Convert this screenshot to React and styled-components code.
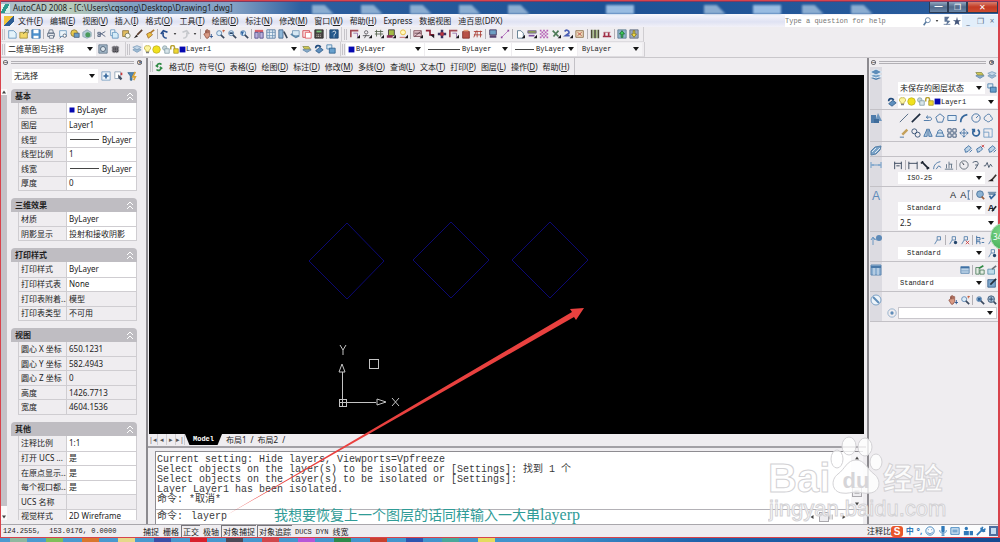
import React, { useState } from 'react';
import styled, { createGlobalStyle } from 'styled-components';

// ----- small drawings, all on a 12 x 12 grid
const lens = (
  <>
    <circle cx="5" cy="5" r="3" fill="#dcecf8" stroke="#5b84b0" />
    <path d="M7 7l4 4" stroke="#3b4a60" strokeWidth="2" />
  </>
);

const glyphs = {
  page: <path d="M2 2h6l3 3v6H2z" fill="#e4f3fb" stroke="#5f93bd" />,
  open: <><path d="M1 4h9v7H1z" fill="#f3d766" stroke="#a08a3a" /><path d="M5 6l5-5M7 1h4v4" stroke="#55603c" /></>,
  save: <><path d="M1 1h10v10H1z" fill="#4f93cf" stroke="#3c74aa" /><path d="M3 1h6v4H3zM3 8h6v3H3z" fill="#fff" /></>,
  print: <><path d="M4 1h4l1 4H3zM2 5h8v4H2z" fill="#e6e9ee" stroke="#59687c" /><path d="M4 8h5v3H4z" fill="#fff" stroke="#59687c" /></>,
  preview: <><path d="M2 2h8v7H2z" fill="#eef6fb" stroke="#6c9ac0" /><circle cx="8" cy="8" r="2" fill="#fff" stroke="#4d5c70" /><path d="M2 11l2-2" stroke="#4d5c70" /></>,
  publish: <><circle cx="5" cy="5" r="4" fill="#e9c94b" stroke="#8a7b40" /><path d="M5 5h6v5H5z" fill="#6a9cc6" stroke="#48617c" /></>,
  globe: <><path d="M6 1l5 3v5l-5 2-5-2V4z" fill="#b4cbd6" stroke="#8aa2b2" /><circle cx="7" cy="7" r="3" fill="#4a9a5c" /></>,
  cut: <path d="M10 3L3 7M10 9L4 5M1 4h3v2H1zM1 7h3v2H1z" stroke="#4b5c78" />,
  copy: <><path d="M2 1h5v7H2z" fill="#fff" stroke="#5f93bd" /><path d="M4 4h5l2 2v5H4z" fill="#d4ecf8" stroke="#5f93bd" /></>,
  paste: <><path d="M2 2h7v7H2z" fill="#e1bd5e" stroke="#8c7440" /><circle cx="8" cy="8" r="3" fill="#f8f8f0" stroke="#71785a" /></>,
  brush: <><path d="M11 1L5 7" stroke="#5b4030" strokeWidth="2" /><path d="M1 11l3-4 2 2z" fill="#26221f" /></>,
  match: <><path d="M11 1L6 5" stroke="#b07a2c" strokeWidth="2" /><path d="M2 6l4-2 3 3-5 4z" fill="#ecc23e" stroke="#a06a30" /></>,
  undo: <path d="M8 11C4 11 3 8 4 4M1 6l3-4 5 2" stroke="#254c8c" strokeWidth="2" />,
  redo: <path d="M4 11c4 0 5-3 4-7M11 6L8 2 3 4" stroke="#c6c8cc" strokeWidth="2" />,
  pan: <><path d="M3 5V2h1v3V1h2v4V2h2v6l-2 3H4L1 6z" fill="#d99a84" stroke="#96594a" /><path d="M10 6v5M8 9h4" stroke="#284f8a" /></>,
  zoom: <>{lens}<path d="M9 2h3M10 1v3" stroke="#c25432" /></>,
  zoomWin: <>{lens}<path d="M3 5h4" stroke="#26446a" strokeWidth="2" /></>,
  zoomPrev: <>{lens}<path d="M2 3h4L4 8z" fill="#3367a4" /></>,
  props: <><path d="M1 1h10v3H1z" fill="#d9606a" /><path d="M1 4h4v7H1zM7 4h4v7H7z" fill="#b9b0dc" stroke="#514a86" /></>,
  grid: <><path d="M1 1h10v10H1z" fill="#eaf2f8" stroke="#486d98" /><path d="M4 1v10M8 1v10M1 4h10M1 8h10" stroke="#6c91b4" /></>,
  palette: <><path d="M1 1h5v10H1z" fill="#8fb8d9" stroke="#46698e" /><path d="M7 3l4 8" stroke="#3b4858" strokeWidth="2" /></>,
  sheets: <><path d="M3 2h8v6H3z" fill="#d7e8f3" stroke="#7396b4" /><path d="M1 6l6 4 4-2" stroke="#5a87a9" strokeWidth="2" /></>,
  markup: <><path d="M1 2h8v8H1z" fill="#fbe3e3" stroke="#d0414a" /><path d="M4 4h7v7H4z" fill="#fff" stroke="#e0565c" /></>,
  calc: <><path d="M1 1h10v10H1z" fill="#4b4644" stroke="#2c2a2a" /><path d="M3 3h6" stroke="#78c478" strokeWidth="2" /><path d="M3 7h6M3 9h6" stroke="#e7ddd2" strokeDasharray="1 1" /></>,
  help: <><path d="M1 1h10v10H1z" fill="#25598c" stroke="#1f466e" /><path d="M4 4c1-2 4-2 4 0S6 6 6 8M6 9v1" stroke="#fff" /></>,
  dpxA: <><path d="M1 10V2h9" stroke="#a24a55" strokeWidth="2" /><path d="M4 5h5v5" stroke="#8e68a6" /><path d="M8 11h4V7z" fill="#16151a" /></>,
  dpxB: <><circle cx="5" cy="4" r="2" stroke="#57545a" /><path d="M1 8h8M3 11l2-4" stroke="#49494c" /><path d="M8 11h4V7z" fill="#16151a" /></>,
  dpxC: <><path d="M1 3h10M1 6h10M3 1v8M8 1v8" stroke="#52604c" /><path d="M8 11h4V7z" fill="#16151a" /></>,
  dpxD: <><path d="M3 1h7v7H3z" fill="#a2b944" stroke="#3d3138" /><path d="M1 9h7" stroke="#8b3157" strokeWidth="3" /><path d="M8 11h4V7z" fill="#16151a" /></>,
  dpxE: <><circle cx="6" cy="4" r="3" fill="#fff8bf" stroke="#e3b52e" /><path d="M2 10h7" stroke="#c35656" /><path d="M8 11h4V7z" fill="#16151a" /></>,
  dpxF: <><path d="M1 2h9v7H1z" fill="#e3c4cc" stroke="#7e4c57" /><path d="M2 9l7-6M2 5h8" stroke="#5a3a44" /><path d="M8 11h4V7z" fill="#16151a" /></>,
  dpxG: <><path d="M1 2h5v5h5" stroke="#8e2034" strokeWidth="2" /><path d="M6 7h5v4z" fill="#1f1822" /></>,
  dpxH: <><path d="M6 1v10M1 6h10" stroke="#3a3260" strokeWidth="3" /><path d="M4 4h4v4H4z" fill="#b9333f" /></>,
  dpxI: <><path d="M2 3h8v8H2z" fill="#b85247" stroke="#7d2a24" /><path d="M3 2h6" stroke="#e6a07a" strokeWidth="2" /></>,
  dpxJ: <path d="M1 3h10M1 10l3-8M5 10V2M9 10V2M1 7h10" stroke="#a83c33" />,
  dpxK: <><path d="M2 1h8v6H2z" fill="#6ea0c4" stroke="#43355f" /><path d="M2 9h8" stroke="#56426f" strokeWidth="3" /></>,
  dpxL: <><path d="M2 10l8-8" stroke="#b36ac0" /><path d="M1 10h2M9 2h2" stroke="#8b3e98" strokeWidth="2" /></>,
  dpxM: <><path d="M3 2h4l3 3v6H3z" fill="#fff" stroke="#4e7086" /><path d="M8 11h4V7z" fill="#16151a" /></>,
  dpxN: <><path d="M1 2h10v3H1z" fill="#8fa450" stroke="#77609c" /><path d="M2 8h7" stroke="#7d4fa0" strokeWidth="2" /><path d="M8 11h4V7z" fill="#16151a" /></>,
  dpxO: <path d="M1 2h2M5 2h2M9 2h2M3 4h2M7 4h2M1 6h2M5 6h2M9 6h2M3 8h2M7 8h2M1 10h2M5 10h2M9 10h2" stroke="#b45fb4" strokeWidth="2" />,
  dpxP: <><path d="M2 2l7 7M9 2L3 9" stroke="#4d7a56" strokeWidth="2" /><path d="M8 11h4V7z" fill="#16151a" /></>,
  dpxQ: <><path d="M2 3c2-3 6-1 5 2L3 8h5" stroke="#4b5fb4" strokeWidth="2" /><path d="M8 11h4V7z" fill="#16151a" /></>,
  dpxR: <><path d="M1 2h9v8H1z" fill="#ecd8b8" stroke="#8a6d4a" /><path d="M3 4l5 4M8 4L3 8" stroke="#b3473e" /></>,
  dpxS: <><path d="M2 1v10M6 1v10M10 1v10" stroke="#4a4c36" strokeWidth="2" /><path d="M4 1v10M8 1v10" stroke="#8eae5e" /></>,
  dpxT: <><path d="M1 9h10M3 8V4M8 8V4" stroke="#a12f47" strokeWidth="2" /><path d="M2 4h8" stroke="#b36a7c" /></>,
  up: <><path d="M1 1h10v10H1z" fill="#8fb3c9" stroke="#5b7b93" /><path d="M6 2l3 4H7v4H5V6H3z" fill="#3dd05a" stroke="#1c6b34" /></>,
  down: <><path d="M1 1h10v10H1z" fill="#9aa6bd" stroke="#5f6a82" /><path d="M6 10L3 6h2V2h2v4h2z" fill="#f3de4c" stroke="#84751c" /></>,
  gear: <><path d="M1 1h10v10H1z" fill="#a6bacb" stroke="#5f7488" /><circle cx="6" cy="6" r="3" fill="#dfe8ee" stroke="#44566a" /></>,
  chip: <><path d="M3 3h7v7H3z" fill="#35343a" /><path d="M2 4h9M2 6h9M2 8h9M5 2v9M8 2v9" stroke="#77767c" /></>,
  layers: <><path d="M6 7l5 2-5 2-5-2z" fill="#4c7fae" /><path d="M6 4l6 3-6 2-6-2z" fill="#77a3c9" stroke="#e4edf5" /><path d="M6 0l6 3-6 3-6-3z" fill="#5d8db9" stroke="#e4edf5" /></>,
  layersSoft: <><path d="M6 5l5 2-5 3-5-3z" fill="#9cb9d2" stroke="#7d9fbd" /><path d="M6 2l5 2-5 3-5-3z" fill="#c3d6e6" stroke="#7d9fbd" /></>,
  layerMake: <><path d="M6 5l5 2-5 3-5-3z" fill="#87a9c8" stroke="#5f87ab" /><path d="M1 3h7l2 3H3z" fill="#d2c854" stroke="#8d9150" /></>,
  layerPrev: <><path d="M7 4l4 3-5 4-4-3z" fill="#5f8fbd" stroke="#33608e" /><path d="M2 5c0-4 5-4 6-1" stroke="#214b7c" strokeWidth="2" /></>,
  layerState: <><path d="M1 1h6v5H1z" fill="#dceaf4" stroke="#4c80ad" /><path d="M4 5h7v6H4z" fill="#68a0cd" stroke="#2f618f" /></>,
  bulb: <><path d="M6 1a3 3 0 0 1 2 6v2H4V7a3 3 0 0 1 2-6z" fill="#fdf5a0" stroke="#b9aa3e" /><path d="M4 10h4" stroke="#808080" strokeWidth="2" /></>,
  sun: <circle cx="6" cy="6" r="5" fill="#f1e11d" stroke="#bcae22" />,
  vp: <><circle cx="5" cy="4" r="3" fill="#c7d6da" stroke="#86a0a8" /><path d="M5 5h6v6H5z" fill="#d8e6ea" stroke="#7c98a3" /></>,
  lock: <><path d="M1 6V3c0-3 5-3 5 0v3" stroke="#b9a233" strokeWidth="2" /><path d="M5 5h6v6H5z" fill="#efd832" stroke="#a18f22" /></>,
  navy: <path d="M1 1h10v10H1z" fill="#0508b0" />,
  plusBox: <><path d="M1 1h10v10H1z" fill="#edf4fa" stroke="#7a9fc2" /><path d="M6 3v6M3 6h6" stroke="#35679c" strokeWidth="2" /></>,
  pick: <><path d="M1 1h7v8H1z" fill="#fff" stroke="#8aa0b4" /><path d="M5 4l5 5-2 2-3-3z" fill="#435064" /><path d="M9 2v3" stroke="#cc3a3a" strokeWidth="2" /></>,
  filter: <><path d="M1 2h8L6 6v5H4V6z" fill="#4e87b8" stroke="#36668f" /><path d="M10 1L7 7h3l-2 4" stroke="#d9a336" strokeWidth="2" /></>,
  dpx: <path d="M9 3C6 0 2 4 5 6M3 9c3 3 7-1 4-3M2 4l3 2M7 6l3 2" stroke="#2f8a44" strokeWidth="2" />,
  // right hand panels
  shapes: <><path d="M1 3h5v8H1z" fill="#4f7cab" /><path d="M8 1l4 8H5z" fill="#6e97bf" /><path d="M4 7h5v4H4z" fill="#3f6c9b" /></>,
  solid: <><path d="M1 7l4-4 6-1-1 4-4 4-5 1z" fill="#7aa3c8" stroke="#5781a8" /><path d="M2 8l4-4M5 9l5-5" stroke="#dce8f2" /></>,
  dims: <path d="M1 3v6M11 3v6M1 6h10M3 5v2M9 5v2" stroke="#6f9cc7" />,
  leader: <><circle cx="9" cy="4" r="3" fill="#5d8ab7" /><path d="M3 11V4l4 2M1 6l2-3 2 3" stroke="#6c98c2" /></>,
  tableBig: <><path d="M1 1h10v10H1z" fill="#8cb0d2" stroke="#6089b2" /><path d="M1 3h10" stroke="#4878a8" strokeWidth="2" /><path d="M4 4v7M8 4v7" stroke="#dbe7f2" /></>,
  compass: <><circle cx="6" cy="6" r="5" fill="#eef4f9" stroke="#7fa3c6" /><path d="M3 3l6 6" stroke="#5f8cb8" strokeWidth="2" /></>,
  line: <path d="M1 11L11 1" stroke="#3e5876" />,
  ray: <path d="M1 11L11 1" stroke="#1f2d40" strokeWidth="2" />,
  pline: <path d="M1 9h7c3 0 3-4 0-4H4M6 3L4 5l2 2" stroke="#35679c" />,
  polygon: <path d="M6 1l5 4-2 6H3L1 5z" stroke="#35679c" />,
  rect: <path d="M1 3h10v6H1z" fill="#e5eff8" stroke="#35679c" />,
  arc: <path d="M2 11c0-5 3-8 8-9" stroke="#35679c" strokeWidth="2" />,
  circle: <><circle cx="6" cy="6" r="5" stroke="#35679c" /><path d="M6 6l3-3" stroke="#35679c" /></>,
  cloud: <path d="M4 3c2-3 6-1 5 1 3 1 3 5 0 5-2 3-5 1-5 0-3 0-4-4 0-6z" stroke="#35679c" />,
  erase: <><path d="M10 2L4 8" stroke="#c4a05a" strokeWidth="3" /><path d="M1 11h5" stroke="#35679c" /></>,
  copyObj: <><circle cx="4" cy="4" r="3" stroke="#28456a" /><circle cx="8" cy="8" r="3" stroke="#28456a" /></>,
  mirror: <path d="M5 1v9H1zM7 1v9h4z" fill="#b7cee2" stroke="#35679c" />,
  offset: <path d="M1 10h10L9 6H3zM3 6c0-5 6-5 6 0" fill="#d5e3ef" stroke="#35679c" />,
  array: <path d="M1 1h4v4H1zM7 1h4v4H7zM1 7h4v4H1zM7 7h4v4H7z" stroke="#28456a" />,
  move: <path d="M6 1v10M1 6h10M4 3l2-2 2 2M4 9l2 2 2-2M3 4L1 6l2 2M9 4l2 2-2 2" stroke="#35679c" />,
  rotate: <path d="M3 3a4 4 0 1 0 5-1M1 2h3v3" stroke="#35679c" strokeWidth="2" />,
  scale: <path d="M1 1h10v10H1zM1 5h6v6" stroke="#6c98c2" />,
  stamp: <><path d="M3 10l-1-4 5-4 3 3-4 4z" fill="#bcd3e6" stroke="#35679c" /><path d="M8 10l3-3" stroke="#35679c" /></>,
  stampX: <><path d="M3 10l-1-4 5-3 2 3-3 3z" fill="#bcd3e6" stroke="#35679c" /><path d="M8 1l3 3M11 1L8 4" stroke="#c93a3a" /></>,
  dimLin: <path d="M2 2v9M10 2v9M2 4h8M4 7h4" stroke="#24344a" />,
  dimAlign: <path d="M1 2v9M11 2v9M1 4h10" stroke="#24344a" />,
  dimArc: <path d="M2 2l8 8M1 4l3-2M8 11l3-2" stroke="#1c2430" strokeWidth="2" />,
  dimOrd: <path d="M2 11c0-5 3-8 8-9M5 11l3-4 3 2" stroke="#35679c" />,
  dimBase: <path d="M1 11h10M3 10V5M6 10V2M9 10V5M6 5h4" stroke="#56697c" />,
  dimRad: <><circle cx="6" cy="6" r="5" stroke="#5a6570" /><path d="M6 6L4 3" stroke="#1c2430" /></>,
  dimJog: <path d="M2 3c5-3 8 0 6 3L5 11M5 6h3" stroke="#35465c" />,
  wave: <path d="M1 7h2l2-4 2 6 2-4 2 3" stroke="#35465c" />,
  styleBrush: <><path d="M11 2L6 8" stroke="#3d3330" strokeWidth="2" /><path d="M1 10h7l-2-3z" fill="#1f1c1c" /></>,
  findText: <><circle cx="6" cy="5" r="4" fill="#8db2d2" stroke="#456f97" /><path d="M8 8l3 3" stroke="#9d5e3a" strokeWidth="2" /></>,
  spell: <><path d="M1 3h10M2 5h8" stroke="#7794ae" strokeWidth="2" /><path d="M3 7l2 3 5-5" stroke="#35679c" strokeWidth="2" /></>,
  mlead: <path d="M2 11l3-5V2h4v4H5" stroke="#4d7ba8" />,
  mleadAdd: <><path d="M2 11l3-5V2h4v4H5" stroke="#4d7ba8" /><circle cx="9" cy="9" r="2" fill="#24466c" /></>,
  mleadDel: <><path d="M2 11l3-5V2h4v4H5" stroke="#4d7ba8" /><path d="M7 7l4 4M11 7l-4 4" stroke="#c93a3a" /></>,
  mleadSet: <path d="M2 1v10M2 3h4v3H2M2 8h4v3M8 4h3M8 9h3" stroke="#35679c" />,
  table: <><path d="M1 2h10v8H1z" fill="#bcd2e6" stroke="#5a85b0" /><path d="M1 3h10" stroke="#3f70a3" strokeWidth="2" /><path d="M1 7h10" stroke="#7fa3c6" /></>,
  link: <><path d="M1 3h4v8H1zM6 6h5v5H6z" fill="#e3ede3" stroke="#4d7b5c" /><path d="M5 4l5-3" stroke="#2f8a44" strokeWidth="2" /></>,
  sheetPen: <><path d="M1 5h8v6H1z" fill="#bddbe9" stroke="#5b93ae" /><path d="M6 5l5-4" stroke="#6a7078" strokeWidth="2" /></>,
  tableStyle: <><path d="M1 2h9v9H1z" fill="#7ea6cb" stroke="#35608c" /><path d="M4 8l7-7" stroke="#26303c" strokeWidth="2" /></>,
  zoomAll: <>{lens}<path d="M3 3h4v4H3z" fill="#2f6297" /></>,
  zoomExt: <><circle cx="5" cy="5" r="4" fill="#a6c2da" stroke="#38506c" /><path d="M5 2v6M2 5h6" stroke="#25405f" /><path d="M8 8l3 3" stroke="#3b4a60" strokeWidth="2" /></>,
  orbit: <><circle cx="6" cy="6" r="5" stroke="#8baac6" /><circle cx="6" cy="6" r="2" fill="#5f8cb8" /></>,
  a: <text x="6" y="10" textAnchor="middle" fontSize="11" fontFamily="Liberation Sans" fill="#20242a">A</text>,
  aBig: <text x="6" y="11" textAnchor="middle" fontSize="12" fontFamily="Liberation Sans" fill="#5f8cba">A</text>,
  aCur: <><text x="4" y="10" textAnchor="middle" fontSize="11" fontFamily="Liberation Sans" fill="#20242a">A</text><path d="M10 1v10M9 1h3M9 11h3" stroke="#35679c" /></>,
  aPen: <><text x="5" y="10" textAnchor="middle" fontSize="11" fontWeight="700" fontFamily="Liberation Sans" fill="#20242a">A</text><path d="M11 4L6 10" stroke="#20242a" strokeWidth="2" /></>,
  // input method bar
  smile: <><circle cx="6" cy="6" r="5" stroke="#2f78b8" /><path d="M4 4v1M8 4v1M3 7c1 3 5 3 6 0" stroke="#2f78b8" /></>,
  mic: <><path d="M6 1v5" stroke="#2f78b8" strokeWidth="4" strokeLinecap="round" /><path d="M2 5c0 5 8 5 8 0M6 9v3M4 11h4" stroke="#2f78b8" /></>,
  keyb: <><path d="M1 2h10v8H1z" fill="#cfe2f2" stroke="#2f78b8" /><path d="M3 5h6M3 7h6" stroke="#2f78b8" /></>,
  user: <><circle cx="4" cy="3" r="2" fill="#2f78b8" /><path d="M1 6h6v5H1zM8 6h4v5H8z" fill="#2f78b8" /></>,
  wrench: <path d="M1 11l6-6M6 2c0 4 2 5 5 4M8 1L7 4l3 1 1-2" stroke="#2f78b8" strokeWidth="2" />,
  search: <><circle cx="7" cy="5" r="3" stroke="#5a7ba0" /><path d="M5 7l-3 4" stroke="#5a7ba0" strokeWidth="2" /></>,
  comm: <><path d="M3 1h6L6 5l4 1-5 5 1-4H3z" fill="#5b7396" /><path d="M2 10h8" stroke="#5b7396" /></>,
  star: <path d="M6 1l1 4h4L8 7l1 4-3-2-3 2 1-4-3-2h4z" fill="#43557a" />,
  // scroll bar parts
  triUp: <path d="M2 9l4-6 4 6z" fill="#444" />,
  triDown: <path d="M2 3l4 6 4-6z" fill="#444" />,
  triLeft: <path d="M9 2L3 6l6 4z" fill="#444" />,
  triRight: <path d="M3 2l6 4-6 4z" fill="#444" />,
  ribsH: <path d="M1 3h10M1 6h10M1 9h10" stroke="#8a888d" />,
  ribsV: <path d="M3 1v10M6 1v10M9 1v10" stroke="#8a888d" />,
};

function Glyph({ name, size = 10 }) {
  return (
    <svg width={size} height={size} viewBox="0 0 12 12" fill="none" aria-hidden="true">
      {glyphs[name]}
    </svg>
  );
}

function Tools({ list }) {
  return list.map((name, i) => {
    if (name === '|') return <Divider key={i} />;
    if (name === '.') return <Dot key={i} aria-label="more"><Glyph name="triDown" size={4} /></Dot>;
    return <Tool key={i} aria-label={name}><Glyph name={name} /></Tool>;
  });
}

function Combo({ label, value, sans, lead = [], line, pad, ...rest }) {
  return (
    <ComboFrame {...rest}>
      {lead.map((name) => <Glyph key={name} name={name} size={name === 'navy' ? 7 : 9} />)}
      {line && <Stroke $w={line} />}
      <ComboSelect aria-label={label} $sans={sans} $pad={pad} defaultValue={value}>
        <option>{value}</option>
      </ComboSelect>
      <svg width="6" height="4" viewBox="0 0 6 4" aria-hidden="true"><path d="M0 0h6L3 4z" fill="#151515" /></svg>
    </ComboFrame>
  );
}

function Key({ text }) {
  const m = text.match(/^(.*)\((.)\)$/);
  return m ? <>{m[1]}(<u>{m[2]}</u>)</> : text;
}

const menus = ['文件(F)', '编辑(E)', '视图(V)', '插入(I)', '格式(O)', '工具(T)', '绘图(D)', '标注(N)', '修改(M)', '窗口(W)', '帮助(H)', 'Express', '数据视图', '迪百思(DPX)'];
const dpxMenus = ['格式(F)', '符号(C)', '表格(G)', '绘图(D)', '标注(D)', '修改(M)', '多线(O)', '查询(L)', '文本(T)', '打印(P)', '图层(L)', '操作(D)', '帮助(H)'];

const standard = ['page', 'open', 'save', '|', 'print', 'preview', 'publish', 'globe', '|', 'cut', 'copy', 'paste', 'brush', 'match', '|', 'undo', '.', 'redo', '.', '|', 'pan', 'zoom', 'zoomWin', 'zoomPrev', '|', 'props', 'grid', 'palette', 'sheets', 'markup', 'calc', '|', 'help'];
const express = ['dpxA', 'dpxB', 'dpxC', 'dpxD', 'dpxE', '|', 'dpxF', 'dpxG', 'dpxH', 'dpxA', 'dpxI', 'dpxJ', '|', 'dpxK', 'dpxL', '|', 'dpxM', 'dpxN', 'dpxO', 'dpxP', 'dpxQ', 'dpxR', '|', 'dpxS', 'dpxT', '|', 'up', 'down'];

// name, value, read only, mark in front of the value
const groups = [
  { title: '基本', rows: [['颜色', 'ByLayer', 0, 'navy'], ['图层', 'Layer1'], ['线型', 'ByLayer', 0, 'line'], ['线型比例', '1'], ['线宽', 'ByLayer', 0, 'line'], ['厚度', '0']] },
  { title: '三维效果', rows: [['材质', 'ByLayer'], ['阴影显示', '投射和接收阴影']] },
  { title: '打印样式', rows: [['打印样式', 'ByLayer'], ['打印样式表', 'None'], ['打印表附着...', '模型', 1], ['打印表类型', '不可用', 1]] },
  { title: '视图', rows: [['圆心 X 坐标', '650.1231', 1], ['圆心 Y 坐标', '582.4943', 1], ['圆心 Z 坐标', '0', 1], ['高度', '1426.7713', 1], ['宽度', '4604.1536', 1]] },
  { title: '其他', rows: [['注释比例', '1:1'], ['打开 UCS ...', '是'], ['在原点显示...', '是'], ['每个视口都...', '是'], ['UCS 名称', '', 1], ['视觉样式', '2D Wireframe']] },
];

const history = [
  'Current setting: Hide layers, Viewports=Vpfreeze',
  'Select objects on the layer(s) to be isolated or [Settings]: 找到 1 个',
  'Select objects on the layer(s) to be isolated or [Settings]:',
  'Layer Layer1 has been isolated.',
  '命令: *取消*',
];

const modes = [['捕捉'], ['栅格'], ['正交', 1], ['极轴'], ['对象捕捉', 1], ['对象追踪', 1], ['DUCS'], ['DYN'], ['线宽']];

// file icons of the desktop seen through the title bar: s = sheet, w = window
const ghosts = 'sssss-w-swss'.split('');

const taskIcons = ['#8fb8a0', '#7fbf5a', '#d9772e', '#e6d98a', '#3a4fa8', '#d8202c', '#4c4a58', '#d0484c', '#b557d8', '#2c8a4c', '#c8402e', '#2d55b0', '#4aa89a', '#e4dc5e'];

function PaletteHead() {
  return (
    <HeadRow>
      <HeadButton aria-label="最小化">−</HeadButton>
      <HeadLines />
      <HeadButton aria-label="关闭">×</HeadButton>
    </HeadRow>
  );
}

function Properties() {
  return (
    <Palette>
      <PaletteHead />
      <PickRow>
        <Combo label="选择" value="无选择" sans $w={86} $h={14} />
        <Tools list={['plusBox', 'pick', 'filter']} />
      </PickRow>
      <PaletteBody>
        <SideScroll><Glyph name="triUp" size={6} /><i /><Glyph name="triDown" size={6} /></SideScroll>
        <GroupList>
          {groups.map((g) => (
            <section key={g.title}>
              <GroupTitle>
                {g.title}
                <svg width="6" height="8" viewBox="0 0 6 8" fill="none" stroke="#fff" aria-hidden="true"><path d="M0 4l3-3 3 3M0 8l3-3 3 3" /></svg>
              </GroupTitle>
              <PropTable>
                <tbody>
                  {g.rows.map(([name, value, ro, mark]) => (
                    <tr key={name}>
                      <th scope="row">{name}</th>
                      <PropValue $ro={ro}>
                        <span>
                          {mark === 'navy' && <Glyph name="navy" size={6} />}
                          {mark === 'line' && <Stroke $w={29} />}
                          {value}
                        </span>
                      </PropValue>
                    </tr>
                  ))}
                </tbody>
              </PropTable>
            </section>
          ))}
        </GroupList>
      </PaletteBody>
    </Palette>
  );
}

function Drawing() {
  return (
    <Canvas aria-label="Model">
      <g fill="none" stroke="#0b0872">
        <path d="M198 148l37 38-37 38-38-38z" />
        <path d="M302 147l38 38-38 38-38-38z" />
        <path d="M401 147l38 38-38 38-38-38z" />
      </g>
      <g fill="none" stroke="#c4c4c4" shapeRendering="crispEdges">
        <path d="M190 324h7v7h-7zM193 297v34M190 327h37M220 284h9v9h-9z" />
      </g>
      <g fill="none" stroke="#c4c4c4">
        <path d="M193 289l3 8h-6zM237 327l-9-3v6z" />
        <path d="M191 270l3 5 3-5M194 275v5M243 323l7 8M250 323l-7 8" />
      </g>
    </Canvas>
  );
}

function Command() {
  const [cmd, setCmd] = useState('layerp');
  return (
    <CommandFrame>
      <CommandBox>
        <HistoryRow>
          <History>{history.map((t, i) => <div key={i}>{t}</div>)}</History>
          <VScroll>
            <Glyph name="triUp" size={6} />
            <Thumb $push><Glyph name="ribsH" size={6} /></Thumb>
            <Glyph name="triDown" size={6} />
          </VScroll>
        </HistoryRow>
        <InputRow>
          <label htmlFor="cmd">命令:</label>
          <CommandInput id="cmd" value={cmd} onChange={(e) => setCmd(e.target.value)} />
          <HScroll>
            <Glyph name="triLeft" size={6} />
            <Thumb><Glyph name="ribsV" size={6} /></Thumb>
            <Glyph name="triRight" size={6} />
          </HScroll>
        </InputRow>
      </CommandBox>
    </CommandFrame>
  );
}

function Dashboard() {
  return (
    <Dash>
      <PaletteHead />
      <Panel $h={43}>
        <PanelIcon><Glyph name="layers" size={12} /></PanelIcon>
        <PanelBody>
          <PanelRow><Tools list={['layerMake', 'layersSoft']} /></PanelRow>
          <PanelRow><Combo label="图层状态" value="未保存的图层状态" sans $grow /><Tools list={['layerState']} /></PanelRow>
          <PanelRow $wide><Tools list={['layerPrev']} /><Combo label="图层" value="Layer1" lead={['bulb', 'sun', 'vp', 'lock', 'navy']} $grow $tight /></PanelRow>
        </PanelBody>
      </Panel>
      <Panel $h={32}>
        <PanelIcon><Glyph name="shapes" size={12} /></PanelIcon>
        <PanelBody>
          <PanelRow $more><Tools list={['line', 'ray', 'pline', 'polygon', 'rect', 'arc', 'circle', 'cloud']} /></PanelRow>
          <PanelRow $more><Tools list={['erase', 'copyObj', 'mirror', 'offset', 'array', 'move', 'rotate', 'scale']} /></PanelRow>
        </PanelBody>
      </Panel>
      <Panel $h={15}>
        <PanelIcon><Glyph name="solid" size={12} /></PanelIcon>
        <PanelBody><PanelRow><Tools list={['stamp', 'stampX', 'stamp']} /></PanelRow></PanelBody>
      </Panel>
      <Panel $h={30}>
        <PanelIcon><Glyph name="dims" size={12} /></PanelIcon>
        <PanelBody>
          <PanelRow $more><Tools list={['dimLin', '|', 'dimAlign', 'dimArc', 'dimOrd', 'dimBase', '|', 'dimRad', 'dimJog', 'wave']} /></PanelRow>
          <PanelRow><Combo label="标注样式" value="ISO-25" pad={7} $grow /><Tools list={['styleBrush']} /></PanelRow>
        </PanelBody>
      </Panel>
      <Panel $h={45}>
        <PanelIcon><Glyph name="aBig" size={12} /></PanelIcon>
        <PanelBody>
          <PanelRow><Tools list={['a', 'aCur', '|', 'findText', 'spell']} /></PanelRow>
          <PanelRow><Combo label="文字样式" value="Standard" pad={7} $grow /><Tools list={['aPen']} /></PanelRow>
          <PanelRow><Combo label="文字高度" value="2.5" sans $grow $h={14} /></PanelRow>
        </PanelBody>
      </Panel>
      <Panel $h={30}>
        <PanelIcon><Glyph name="leader" size={12} /></PanelIcon>
        <PanelBody>
          <PanelRow><Tools list={['mlead', '|', 'mleadAdd', 'mleadDel', '|', 'mleadSet', 'mlead']} /></PanelRow>
          <PanelRow><Combo label="引线样式" value="Standard" pad={7} $grow /><Tools list={['mleadAdd']} /></PanelRow>
        </PanelBody>
      </Panel>
      <Panel $h={30}>
        <PanelIcon><Glyph name="tableBig" size={12} /></PanelIcon>
        <PanelBody>
          <PanelRow><Tools list={['table', '|', 'link', 'sheetPen']} /></PanelRow>
          <PanelRow><Combo label="表格样式" value="Standard" $grow /><Tools list={['tableStyle']} /></PanelRow>
        </PanelBody>
      </Panel>
      <Panel $h={30}>
        <PanelIcon><Glyph name="compass" size={12} /></PanelIcon>
        <PanelBody>
          <PanelRow><Tools list={['pan', 'zoom', '|', 'zoomAll', 'zoomExt']} /></PanelRow>
          <PanelRow $wide><Tools list={['orbit']} /><Combo label="视图" value="" $grow $edge /></PanelRow>
        </PanelBody>
      </Panel>
    </Dash>
  );
}

function Watermark() {
  return (
    <Mark width="184" height="90" viewBox="0 0 184 90" aria-hidden="true">
      <g fill="#fff" fillOpacity="0.8" stroke="#d3d2d5" strokeWidth="1">
        <ellipse cx="81" cy="10" rx="7" ry="9" />
        <ellipse cx="97" cy="11" rx="7" ry="9" />
        <ellipse cx="69" cy="23" rx="6" ry="9" />
        <ellipse cx="108" cy="26" rx="6" ry="8" />
        <path d="M88 24c9 0 11 9 18 14 8 6 6 18-4 19-6 1-9-1-14-1s-8 2-14 1c-10-1-12-13-4-19 7-5 9-14 18-14z" />
        <text x="0" y="56" fontSize="40" fontWeight="700" fontFamily="Liberation Sans">Bai</text>
        <text x="115" y="53" fontSize="30" fontWeight="700" fontFamily="Noto Sans CJK SC">经验</text>
        <text x="1" y="80" fontSize="22" fontFamily="Liberation Sans">jingyan.baidu.com</text>
      </g>
      <text x="88" y="52" textAnchor="middle" fontSize="22" fontWeight="700" fontFamily="Liberation Sans" fill="#d6d5d8">du</text>
    </Mark>
  );
}

function App() {
  return (
    <Page>
      <GlobalStyle />
      <AppWindow>
        <TitleBar>
          <AppLogo />
          <h1>AutoCAD 2008 - [C:\Users\cqsong\Desktop\Drawing1.dwg]</h1>
          <Ghosts>{ghosts.map((g, i) => <Ghost key={i} $kind={g} />)}</Ghosts>
          <WinButton aria-label="最小化">━</WinButton>
          <WinButton aria-label="还原">❐</WinButton>
          <WinButton aria-label="关闭" $close>✕</WinButton>
        </TitleBar>

        <MenuBar>
          <FileMark />
          {menus.map((m) => <MenuItem key={m}><Key text={m} /></MenuItem>)}
          <HelpBox aria-label="Help" placeholder="Type a question for help" />
          <HelpTools><Tools list={['search', '.', 'comm', 'star']} /></HelpTools>
          <DocButton aria-label="最小化">_</DocButton>
          <DocButton aria-label="还原">❐</DocButton>
          <DocButton aria-label="关闭">×</DocButton>
        </MenuBar>

        <ToolRow>
          <ToolBar $pad={1}><Grip /><Tools list={standard} /></ToolBar>
          <ToolBar $pad={3}><Grip $wide /><Tools list={express} /></ToolBar>
        </ToolRow>

        <ToolRow>
          <ToolBar $pad={4}>
            <Grip />
            <Combo label="工作空间" value="二维草图与注释" sans $w={90} $h={13} />
            <Tools list={['gear', 'chip']} />
          </ToolBar>
          <ToolBar $pad={3}>
            <Grip />
            <Tools list={['layersSoft']} />
            <Combo label="图层" value="Layer1" lead={['bulb', 'sun', 'vp', 'lock', 'navy']} $w={157} $h={13} $tight />
            <Tools list={['layerMake', 'layerPrev', 'layerState']} />
          </ToolBar>
          <ToolBar $pad={1}>
            <Grip />
            <Combo label="颜色" value="ByLayer" lead={['navy']} $w={78} $h={13} />
            <Combo label="线型" value="ByLayer" line={32} $w={86} $h={13} />
            <Combo label="线宽" value="ByLayer" line={19} $w={65} $h={13} />
            <Combo label="打印样式" value="ByLayer" pad={2} $w={64} $h={13} $flat />
          </ToolBar>
        </ToolRow>

        <Main>
          <Properties />
          <Center>
            <DpxBar>
              <Grip />
              <Glyph name="dpx" />
              <DpxItems>{dpxMenus.map((m, i) => <MenuItem key={i}><Key text={m} /></MenuItem>)}</DpxItems>
            </DpxBar>
            <Drawing />
            <TabRow>
              <TabNav aria-label="first">|◂</TabNav>
              <TabNav aria-label="previous">◂</TabNav>
              <TabNav aria-label="next">▸</TabNav>
              <TabNav aria-label="last">▸|</TabNav>
              <Tab $on>Model</Tab>
              <Tab>布局1</Tab>/
              <Tab>布局2</Tab>/
            </TabRow>
            <Command />
            <Arrow width="360" height="210" viewBox="0 0 360 210" aria-hidden="true">
              <path d="M0 208L347 4 345 1 359 0 351 12 349 9z" fill="#e9413f" />
            </Arrow>
            <Note>我想要恢复上一个图层的话同样输入一大串<span>layerp</span></Note>
          </Center>
          <Dashboard />
        </Main>

        <StatusBar>
          <Coords>{'124.2555,  153.0176, 0.0000'}</Coords>
          {modes.map(([m, on]) => <Mode key={m} $on={on} $latin={/^D/.test(m)}>{m}</Mode>)}
          <Scale>注释比</Scale>
          <Ime>
            <ImeLogo>S</ImeLogo>
            <b>中</b>
            <b>°,</b>
            <Glyph name="smile" />
            <Glyph name="mic" />
            <Glyph name="keyb" />
            <Glyph name="user" />
            <Glyph name="wrench" />
          </Ime>
          <Tray />
        </StatusBar>
      </AppWindow>
      <TaskBar>{taskIcons.map((c, i) => <TaskIcon key={i} $c={c} />)}</TaskBar>
      <Watermark />
      <Badge>34</Badge>
    </Page>
  );
}

export default App;

// ----- css global
const GlobalStyle = createGlobalStyle`
  * { box-sizing: border-box; }
  body {
    margin: 0;
    overflow: hidden;
    font: 8px/12px "Noto Sans", "Noto Sans CJK SC", sans-serif;
    color: #222;
  }
  button, input, select {
    font: inherit;
    color: inherit;
    border: 0;
    padding: 0;
    margin: 0;
    background: none;
    border-radius: 0;
    outline: 0;
  }
  svg { flex: none; display: block; }
`;

const Page = styled.div`
  position: relative;
  height: 100vh;
  display: flex;
  flex-direction: column;
  overflow: hidden;
`;
const AppWindow = styled.div`
  flex: 1;
  min-height: 0;
  display: flex;
  flex-direction: column;
  background: #efedf0;
  border: 1px solid #d8434c;
  border-right-width: 2px;
`;

// ----- title
const TitleBar = styled.header`
  height: 13px;
  flex: none;
  display: flex;
  align-items: center;
  gap: 3px;
  border-top: 1px solid #7c3a62;
  background: linear-gradient(90deg, #a9bccd 0, #b6cbb9 70px, #7fa0c4 130px, #86a3c6 230px, #2d5f9f 300px, #1d5295 60%, #2a5d9e 100%);
  h1 {
    margin: 0;
    font-size: 8px;
    font-weight: 400;
    white-space: nowrap;
  }
`;
const AppLogo = styled.i`
  width: 9px;
  height: 9px;
  background: linear-gradient(120deg, #e4f3ef 30%, #2c9a8d 31% 60%, #d7eee9 61%);
`;
const Ghosts = styled.div`
  flex: 1;
  height: 100%;
  padding: 3px 0 0 76px;
  display: flex;
  overflow: hidden;
  filter: blur(1px);
`;
const Ghost = styled.i`
  width: ${(p) => (p.$kind === 'w' ? 28 : 22)}px;
  margin-right: ${(p) => (p.$kind === 'w' ? 21 : 27)}px;
  flex: none;
  background: ${(p) => ({ s: '#8badd1', w: '#98bce2' }[p.$kind] || 'none')};
  clip-path: ${(p) => (p.$kind === 's' ? 'polygon(0 0, 60% 0, 100% 100%, 0 100%)' : 'none')};
`;
const WinButton = styled.button`
  width: ${(p) => (p.$close ? 31 : 19)}px;
  height: 11px;
  margin-left: -3px;
  align-self: flex-start;
  line-height: 10px;
  color: #fff;
  border: 1px solid #2b3c55;
  border-top: 0;
  background: ${(p) => (p.$close ? 'linear-gradient(#d8806e, #c33a24 50%, #cc4a2e)' : 'linear-gradient(#8fa5be, #50698a 50%, #6b86a6)')};
`;

// ----- menus and tool bars
const MenuBar = styled.nav`
  height: 13px;
  flex: none;
  display: flex;
  align-items: center;
  gap: 7px;
  padding-left: 3px;
  background: linear-gradient(#f8f8fd, #dfe2f3 60%, #f2f1f8);
`;
const FileMark = styled.i`
  width: 10px;
  height: 10px;
  margin-right: -3px;
  background: linear-gradient(135deg, #efc33c 45%, #2d5c94 46% 75%, #eef2f7 76%);
`;
const MenuItem = styled.button`
  white-space: nowrap;
  line-height: 12px;
`;
const HelpBox = styled.input`
  width: 137px;
  height: 12px;
  margin-left: auto;
  margin-right: -7px;
  background: #fff;
  font: 7px/12px "Liberation Mono", monospace;
  &::placeholder { color: #777; }
`;
const HelpTools = styled.div`
  height: 12px;
  margin-right: -7px;
  display: flex;
  align-items: center;
  background: #fff;
  button { width: 10px; }
`;
const DocButton = styled.button`
  width: 12px;
  height: 12px;
  margin-right: -7px;
  background: #e2eefa;
  color: #5c728c;
  line-height: 11px;
  &:last-child { margin-right: 0; }
`;
const ToolRow = styled.div`
  height: 15px;
  flex: none;
  display: flex;
`;
const ToolBar = styled.div`
  display: flex;
  align-items: center;
  padding-right: ${(p) => p.$pad || 0}px;
  border-right: 1px solid #cfcdd1;
  border-bottom: 1px solid #dddbdf;
`;
const Grip = styled.i`
  width: 3px;
  height: 11px;
  margin: 0 ${(p) => (p.$wide ? 2 : 1)}px;
  flex: none;
  border: solid #c6c4c9;
  border-width: 0 1px;
`;
const Tool = styled.button`
  width: 12px;
  height: 12px;
  flex: none;
  display: grid;
  place-items: center;
`;
const Divider = styled.i`
  width: 1px;
  height: 10px;
  margin: 0 1px;
  flex: none;
  background: #b3b1b6;
`;
const Dot = styled.button`
  width: 8px;
  height: 12px;
  display: grid;
  place-items: center;
`;
const ComboFrame = styled.div`
  width: ${(p) => (p.$w ? `${p.$w}px` : 'auto')};
  height: ${(p) => p.$h || 12}px;
  flex: ${(p) => (p.$grow ? 1 : 'none')};
  min-width: 0;
  display: flex;
  align-items: center;
  gap: ${(p) => (p.$tight ? 0 : 1)}px;
  padding: 0 3px 0 ${(p) => (p.$tight ? 0 : 2)}px;
  margin-right: 1px;
  background: ${(p) => (p.$flat ? '#f5f4f6' : '#fff')};
  border: ${(p) => (p.$edge ? '1px solid #c9c7cc' : 0)};
`;
const ComboSelect = styled.select`
  appearance: none;
  flex: 1;
  width: 0;
  height: 100%;
  padding-left: ${(p) => p.$pad || 0}px;
  font: ${(p) => (p.$sans ? '8px/12px "Noto Sans", "Noto Sans CJK SC", sans-serif' : '7px/12px "Liberation Mono", monospace')};
`;
const Stroke = styled.i`
  width: ${(p) => p.$w}px;
  height: 1px;
  flex: none;
  margin: 0 1px;
  background: #444;
`;

const Main = styled.main`
  flex: 1;
  min-height: 0;
  display: flex;
  border-top: 1px solid #c9c7cb;
  border-bottom: 1px solid #a9a7ac;
`;

// ----- properties palette
const Palette = styled.aside`
  width: 147px;
  flex: none;
  display: flex;
  flex-direction: column;
  border-right: 2px solid #8c8a8f;
`;
const HeadRow = styled.div`
  height: 9px;
  flex: none;
  display: flex;
  align-items: center;
  gap: 3px;
  padding: 0 4px 0 2px;
`;
const HeadLines = styled.i`
  flex: 1;
  height: 3px;
  border: solid #b2b0b5;
  border-width: 1px 0;
`;
const HeadButton = styled.button`
  width: 5px;
  height: 5px;
  line-height: 4px;
  font-size: 7px;
  border: 1px solid #77757a;
  border-radius: 2px;
  display: grid;
  place-items: center;
`;
const PickRow = styled.div`
  display: flex;
  align-items: center;
  padding: 2px 0 6px 11px;
  gap: 1px;
`;
const PaletteBody = styled.div`
  flex: 1;
  min-height: 0;
  display: flex;
  gap: 4px;
  margin-bottom: 4px;
  overflow: hidden;
`;
const SideScroll = styled.div`
  width: 6px;
  display: flex;
  flex-direction: column;
  background: #fafafa;
  i {
    flex: 1;
    margin-bottom: 8px;
    background: #c4c2c7;
  }
`;
const GroupList = styled.div`
  flex: 1;
  margin-right: 9px;
  display: flex;
  flex-direction: column;
  gap: 7px;
`;
const GroupTitle = styled.h2`
  margin: 0;
  height: 14px;
  padding: 0 4px;
  display: flex;
  align-items: center;
  justify-content: space-between;
  font-size: 8px;
  font-weight: 700;
  background: #bfbdc2;
  border-radius: 4px 4px 0 0;
`;
const PropTable = styled.table`
  width: 119px;
  margin-left: auto;
  table-layout: fixed;
  border-collapse: collapse;
  tr { height: 15px; }
  tr:nth-child(even) { height: 14px; }
  th, td {
    padding: 0 0 0 2px;
    font-weight: 400;
    text-align: left;
    line-height: 12px;
    white-space: nowrap;
    overflow: hidden;
    border: 1px solid #cfcdd1;
    border-top: 0;
  }
  th { width: 48px; }
`;
const PropValue = styled.td`
  background: ${(p) => (p.$ro ? '#efedf0' : '#fff')};
  span {
    display: flex;
    align-items: center;
    gap: 2px;
  }
`;

// ----- drawing area
const Center = styled.section`
  position: relative;
  flex: 1;
  min-width: 0;
  display: flex;
  flex-direction: column;
`;
const DpxBar = styled.nav`
  height: 17px;
  width: max-content;
  flex: none;
  display: flex;
  align-items: center;
  padding: 0 5px 0 1px;
  border-right: 1px solid #c3c1c6;
`;
const DpxItems = styled.div`
  display: flex;
  gap: 5px;
  margin-left: 5px;
`;
const Canvas = styled.svg`
  flex: 1;
  min-height: 0;
  width: calc(100% - 4px);
  margin-left: 1px;
  background: #000;
`;
const TabRow = styled.div`
  height: 11px;
  flex: none;
  display: flex;
  align-items: center;
  padding-left: 1px;
`;
const TabNav = styled.button`
  width: 9px;
  height: 11px;
  font-size: 7px;
  line-height: 10px;
  color: #555;
  border-right: 1px solid #cfcdd1;
`;
const Tab = styled.button`
  height: 11px;
  padding: 0 ${(p) => (p.$on ? 8 : 4)}px;
  line-height: 11px;
  ${(p) => p.$on && `
    font: 700 7px/11px "Liberation Mono", monospace;
    color: #fff;
    background: #000;
    clip-path: polygon(0 0, 100% 0, 88% 100%, 12% 100%);
  `}
`;
const CommandFrame = styled.div`
  flex: none;
  margin: 1px 1px 0 0;
  padding: 3px 3px 0 7px;
  border-top: 2px solid #a3a1a6;
`;
const CommandBox = styled.div`
  border: solid #8e8c91;
  border-width: 1px 0 0 1px;
  background: #fff;
`;
const HistoryRow = styled.div`
  height: 58px;
  display: flex;
  overflow: hidden;
  border-bottom: 1px solid #b3b1b6;
`;
const History = styled.div`
  flex: 1;
  padding: 3px 1px 0;
  font: 10px/10px "Liberation Mono", "Noto Sans CJK SC", monospace;
  color: #3a3a3a;
  white-space: pre;
`;
const VScroll = styled.div`
  width: 12px;
  padding: 3px 0 2px;
  display: flex;
  flex-direction: column;
  align-items: center;
  gap: 4px;
  background: #f6f5f7;
`;
const Thumb = styled.i`
  width: 10px;
  height: 10px;
  margin-top: ${(p) => (p.$push ? 'auto' : 0)};
  display: grid;
  place-items: center;
  border: 1px solid #aaa8ad;
  background: #eeedf0;
`;
const InputRow = styled.div`
  height: 14px;
  display: flex;
  align-items: center;
  padding-left: 1px;
  gap: 8px;
  font: 10px/12px "Liberation Mono", "Noto Sans CJK SC", monospace;
  color: #3a3a3a;
`;
const CommandInput = styled.input`
  flex: 1;
  height: 12px;
`;
const HScroll = styled.div`
  width: 54px;
  display: flex;
  align-items: center;
  gap: 4px;
  svg:last-child { margin-left: 8px; }
`;
const Arrow = styled.svg`
  position: absolute;
  left: 77px;
  bottom: 6px;
`;
const Note = styled.p`
  position: absolute;
  left: 126px;
  bottom: -1px;
  margin: 0;
  font: 14px/20px "Noto Sans CJK SC", sans-serif;
  color: #2f9c97;
  white-space: nowrap;
  span { font: 16px/20px "Liberation Serif", serif; }
`;

// ----- dashboard
const Dash = styled.aside`
  width: 131px;
  flex: none;
  border-left: 2px solid #8c8a8f;
`;
const Panel = styled.section`
  height: ${(p) => p.$h}px;
  margin-left: 1px;
  display: flex;
  border-bottom: 1px solid #c3c1c6;
`;
const PanelIcon = styled.div`
  width: 12px;
  padding-top: 2px;
  background: #dcdbe1;
`;
const PanelBody = styled.div`
  flex: 1;
  min-width: 0;
  display: flex;
  flex-direction: column;
  justify-content: space-evenly;
`;
const PanelRow = styled.div`
  display: flex;
  align-items: center;
  justify-content: flex-end;
  padding-left: ${(p) => (p.$wide ? 4 : p.$more ? 0 : 16)}px;
  padding-right: ${(p) => (p.$more ? 4 : 0)}px;
`;

// ----- status line
const StatusBar = styled.footer`
  height: 12px;
  flex: none;
  display: flex;
  align-items: center;
  overflow: hidden;
`;
const Coords = styled.output`
  width: 140px;
  padding-left: 2px;
  font: 7px/12px "Liberation Mono", monospace;
  white-space: pre;
`;
const Mode = styled.button`
  height: 12px;
  padding: 0 1px;
  margin-right: 1px;
  white-space: nowrap;
  border: solid ${(p) => (p.$on ? '#77757a' : '#efedf0')};
  border-width: 1px 0 0 1px;
  font: ${(p) => (p.$latin ? '7px/12px "Liberation Mono", monospace' : 'inherit')};
`;
const Scale = styled.span`
  margin-left: auto;
  white-space: nowrap;
`;
const Ime = styled.div`
  height: 12px;
  width: 98px;
  display: flex;
  align-items: center;
  justify-content: space-between;
  padding: 0 3px 0 0;
  background: #fbfcfd;
  color: #2f78b8;
`;
const ImeLogo = styled.b`
  width: 12px;
  height: 11px;
  border-radius: 3px;
  background: #e8562a;
  color: #fff;
  font: 700 10px/11px "Liberation Sans", sans-serif;
  text-align: center;
`;
const Tray = styled.i`
  width: 9px;
  height: 10px;
  background: #c3dcf2;
  border: 2px solid #4d6fa0;
`;
const TaskBar = styled.footer`
  height: 4px;
  flex: none;
  display: flex;
  gap: 19px;
  padding-left: 10px;
  background: linear-gradient(90deg, #4c9bd0, #3f93cc 55%, #1f62ab 70%, #144a92);
`;
const TaskIcon = styled.i`
  width: 17px;
  background: ${(p) => p.$c};
`;

// ----- things floating over the window
const Mark = styled.svg`
  position: absolute;
  right: 48px;
  bottom: 16px;
`;
const Badge = styled.button`
  position: absolute;
  right: -17px;
  top: 223px;
  width: 27px;
  height: 27px;
  padding-left: 2px;
  text-align: left;
  color: #fff;
  border: 1px solid #b5dcb9;
  border-radius: 50%;
  background: radial-gradient(circle at 40% 30%, #7bd486, #3aa750);
`;
